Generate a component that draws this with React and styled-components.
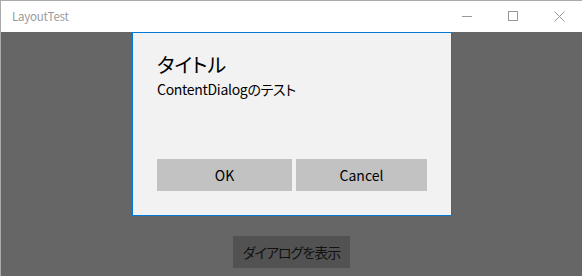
import React from "react";
import styled, { createGlobalStyle } from "styled-components";

const Global = createGlobalStyle`
  html, body { margin: 0; padding: 0; overflow: hidden; background: #fff; }
  * { box-sizing: border-box; }
`;

const FONT = `"Noto Sans CJK JP", "Noto Sans", sans-serif`;

const Window = styled.div`
  width: 582px;
  height: 276px;
  display: flex;
  flex-direction: column;
  border-top: 1px solid #aaaaaa;
  border-left: 1px solid #aaaaaa;
  font-family: ${FONT};
  font-feature-settings: "palt";
  overflow: hidden;
`;

const TitleBar = styled.div`
  height: 31px;
  flex: none;
  display: flex;
  align-items: center;
  background: #ffffff;
`;

const TitleText = styled.div`
  flex: 1;
  padding-left: 11px;
  font-size: 11.5px;
  letter-spacing: -0.2px;
  color: #9a9a9a;
  padding-bottom: 2px;
`;

const CaptionButton = styled.div`
  width: 46px;
  height: 31px;
  display: flex;
  align-items: center;
  justify-content: center;
  color: #999999;
  padding-bottom: 1px;
`;

const Content = styled.div`
  flex: 1;
  position: relative;
  background: #666666;
  display: flex;
  justify-content: center;
  align-items: flex-start;
  padding-top: 204px;
`;

const PageButton = styled.div`
  height: 32px;
  padding: 0 10px;
  display: flex;
  align-items: center;
  background: #525252;
  color: #111111;
  font-size: 14px;
  letter-spacing: -1px;
`;

const Dialog = styled.div`
  position: absolute;
  left: 131px;
  top: 0;
  width: 320px;
  height: 184px;
  background: #f2f2f2;
  border: 1px solid #0078d7;
  padding: 18px 24px 24px;
  display: flex;
  flex-direction: column;
`;

const DialogTitle = styled.div`
  font-size: 20px;
  line-height: 28px;
  color: #000;
`;

const DialogBody = styled.div`
  flex: 1;
  font-size: 14px;
  line-height: 20px;
  letter-spacing: -0.3px;
  color: #000;
`;

const ButtonRow = styled.div`
  display: flex;
  gap: 4px;
`;

const DialogButton = styled.div`
  width: ${(p) => p.$w}px;
  height: 32px;
  display: flex;
  align-items: center;
  justify-content: center;
  background: #c2c2c2;
  color: #000;
  font-size: 14px;
`;

const Icon = ({ children }) => (
  <svg width="10" height="10" viewBox="0 0 10 10" fill="none" stroke="currentColor" strokeWidth="1" shapeRendering="crispEdges">
    {children}
  </svg>
);

export default function App() {
  return (
    <>
      <Global />
      <Window>
        <TitleBar>
          <TitleText>LayoutTest</TitleText>
          <CaptionButton>
            <Icon><line x1="0" y1="5.5" x2="10" y2="5.5" /></Icon>
          </CaptionButton>
          <CaptionButton>
            <Icon><rect x="0.5" y="0.5" width="9" height="9" /></Icon>
          </CaptionButton>
          <CaptionButton>
            <svg width="11" height="11" viewBox="0 0 11 11" fill="none" stroke="currentColor" strokeWidth="1">
              <line x1="0.5" y1="0.5" x2="10.5" y2="10.5" />
              <line x1="10.5" y1="0.5" x2="0.5" y2="10.5" />
            </svg>
          </CaptionButton>
        </TitleBar>
        <Content>
          <PageButton>ダイアログを表示</PageButton>
          <Dialog>
            <DialogTitle>タイトル</DialogTitle>
            <DialogBody>ContentDialogのテスト</DialogBody>
            <ButtonRow>
              <DialogButton $w={135}>OK</DialogButton>
              <DialogButton $w={131}>Cancel</DialogButton>
            </ButtonRow>
          </Dialog>
        </Content>
      </Window>
    </>
  );
}
